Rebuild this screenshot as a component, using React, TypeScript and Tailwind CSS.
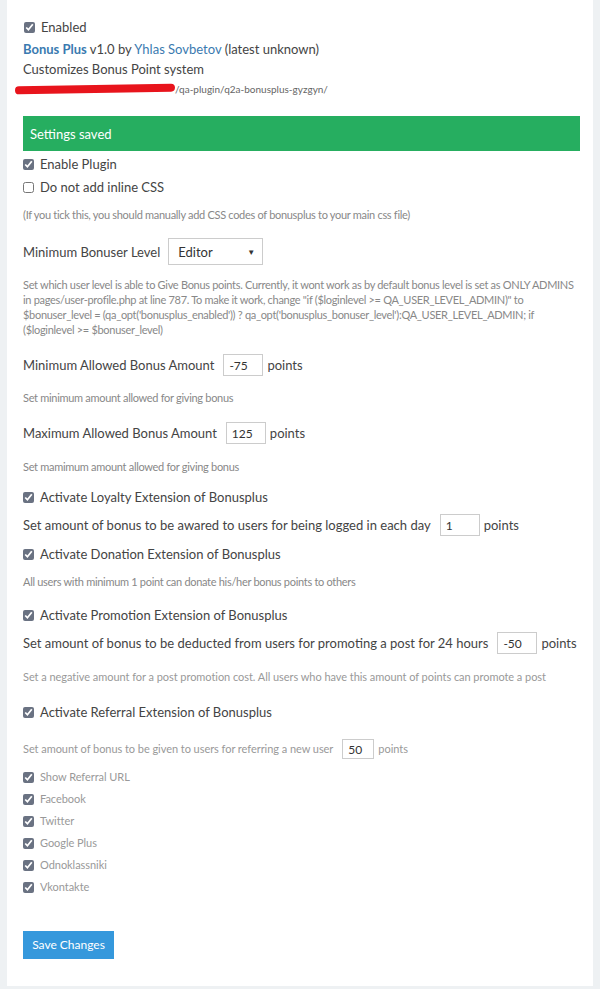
import React from "react";

function Check({ checked = true, label, className = "" }: { checked?: boolean; label: string; className?: string }) {
  return (
    <label className={`flex items-center gap-[6px] ${className}`}>
      <input type="checkbox" defaultChecked={checked} className="h-[11px] w-[11px] m-0 accent-gray-500" />
      <span>{label}</span>
    </label>
  );
}

function Num({ value, w = "w-[40px]", h = "h-[22px]" }: { value: string; w?: string; h?: string }) {
  return (
    <input
      defaultValue={value}
      className={`${w} ${h} ml-[9px] mr-[4px] border border-[#ccc] bg-white px-[5px] text-[12px] text-[#333] outline-none`}
    />
  );
}

export default function App() {
  const note = "text-[11px] text-[#888] tracking-[-0.3px]";
  const wide = "text-[11px] leading-[16px] text-[#999] tracking-[-0.05px]";
  return (
    <div className="min-h-[989px] bg-[#eef1f3] px-[7px] pb-[3px]" style={{ fontFamily: "Lato, 'Noto Sans', sans-serif" }}>
      <div className="bg-white px-[16px] pt-[17px] pb-[27px] text-[13px] leading-[20px] text-[#444]">
        <Check label="Enabled" className="ml-[1px]" />
        <div className="mt-[2px]">
          <a className="font-bold text-[#3a7ab0]">Bonus Plus</a> v1.0 by <a className="text-[#3a7ab0]">Yhlas Sovbetov</a> (latest unknown)
        </div>
        <div>Customizes Bonus Point system</div>
        <div className="flex items-center -ml-[8px] mt-[2px] text-[10px] leading-[16px] text-[#666]">
          <span className="inline-block h-[8px] w-[160px] -rotate-1 rounded-full bg-[#e8141c]" />
          <span>/qa-plugin/q2a-bonusplus-gyzgyn/</span>
        </div>

        <div className="mt-[19px] mr-[-3px] flex h-[35px] items-center bg-[#26ae60] px-[7px] text-white">Settings saved</div>

        <Check label="Enable Plugin" className="mt-[3px]" />
        <Check label="Do not add inline CSS" checked={false} className="mt-[3px]" />
        <p className={`${note} leading-[16px] mt-[10px]`}>(If you tick this, you should manually add CSS codes of bonusplus to your main css file)</p>

        <div className="mt-[15px] flex items-center gap-[8px]">
          <span>Minimum Bonuser Level</span>
          <div className="flex h-[27px] w-[95px] items-center justify-between border border-[#ccc] pl-[9px] pr-[7px] text-[13px] text-[#333]">
            <span>Editor</span>
            <span className="text-[8px]">▼</span>
          </div>
        </div>
        <p className={`${note} mt-[12px] leading-[15px]`}>
          Set which user level is able to Give Bonus points. Currently, it wont work as by default bonus level is set as ONLY ADMINS in pages/user-profile.php at line 787. To make it work, change "if ($loginlevel &gt;= QA_USER_LEVEL_ADMIN)" to $bonuser_level = (qa_opt('bonusplus_enabled')) ? qa_opt('bonusplus_bonuser_level'):QA_USER_LEVEL_ADMIN; if ($loginlevel &gt;= $bonuser_level)
        </p>

        <div className="mt-[17px] flex items-center">
          <span>Minimum Allowed Bonus Amount</span>
          <Num value="-75" />
          <span>points</span>
        </div>
        <p className={`${note} leading-[16px] mt-[14px]`}>Set minimum amount allowed for giving bonus</p>

        <div className="mt-[16px] flex items-center">
          <span>Maximum Allowed Bonus Amount</span>
          <Num value="125" />
          <span>points</span>
        </div>
        <p className={`${note} leading-[16px] mt-[15px]`}>Set mamimum amount allowed for giving bonus</p>

        <Check label="Activate Loyalty Extension of Bonusplus" className="mt-[12px]" />
        <div className="mt-[7px] flex items-center">
          <span>Set amount of bonus to be awared to users for being logged in each day</span>
          <Num value="1" />
          <span>points</span>
        </div>
        <Check label="Activate Donation Extension of Bonusplus" className="mt-[8px]" />
        <p className={`${note} leading-[16px] mt-[10px]`}>All users with minimum 1 point can donate his/her bonus points to others</p>

        <Check label="Activate Promotion Extension of Bonusplus" className="mt-[15px]" />
        <div className="mt-[7px] flex items-center whitespace-nowrap">
          <span>Set amount of bonus to be deducted from users for promoting a post for 24 hours</span>
          <Num value="-50" />
          <span>points</span>
        </div>
        <p className={`${wide} mt-[15px]`}>Set a negative amount for a post promotion cost. All users who have this amount of points can promote a post</p>

        <Check label="Activate Referral Extension of Bonusplus" className="mt-[17px]" />
        <div className={`${wide} mt-[17px] flex items-center`}>
          <span>Set amount of bonus to be given to users for referring a new user</span>
          <Num value="50" w="w-[32px]" h="h-[20px]" />
          <span>points</span>
        </div>

        <div className={`${wide} mt-[7px] flex flex-col leading-[22px]`}>
          {["Show Referral URL", "Facebook", "Twitter", "Google Plus", "Odnoklassniki", "Vkontakte"].map((s) => (
            <Check key={s} label={s} />
          ))}
        </div>

        <button className="mt-[33px] h-[28px] w-[91px] bg-[#3598dc] text-[12px] text-white">Save Changes</button>
      </div>
    </div>
  );
}
